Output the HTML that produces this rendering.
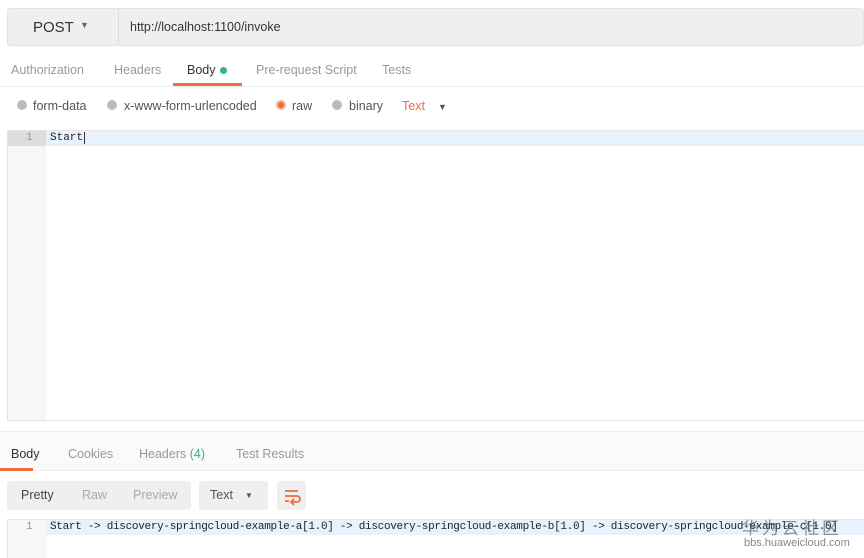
<!DOCTYPE html>
<html><head><meta charset="utf-8"><style>
*{margin:0;padding:0;box-sizing:border-box}
body{width:864px;height:558px;overflow:hidden;background:#fff;font-family:"Liberation Sans",sans-serif;position:relative;color:#333}
.a{position:absolute}
.mono{font-family:"Liberation Mono",monospace}
</style></head><body>
<div class="a" style="left:7px;top:8px;width:857px;height:38px;background:#efefef;border:1px solid #e3e3e3;border-radius:3px"></div>
<div class="a" style="left:118px;top:9px;width:1px;height:36px;background:#ddd"></div>
<div class="a" style="left:33px;top:19px;font-size:15px;color:#333">POST</div>
<div class="a" style="left:80px;top:20px;font-size:9px;color:#666">▼</div>
<div class="a" style="left:130px;top:20px;font-size:12.5px;color:#333">http://localhost:1100/invoke</div>

<div class="a" style="left:0;top:86px;width:864px;height:1px;background:#eee"></div>
<div class="a" style="top:63px;left:11px;font-size:12.5px;color:#999">Authorization</div>
<div class="a" style="top:63px;left:114px;font-size:12.5px;color:#999">Headers</div>
<div class="a" style="top:63px;left:187px;font-size:12.5px;color:#333">Body</div>
<div class="a" style="top:67px;left:220px;width:7px;height:7px;border-radius:50%;background:#2eb886"></div>
<div class="a" style="top:83px;left:173px;width:69px;height:3px;background:#f26b3a"></div>
<div class="a" style="top:63px;left:256px;font-size:12.5px;color:#999">Pre-request Script</div>
<div class="a" style="top:63px;left:382px;font-size:12.5px;color:#999">Tests</div>

<div class="a" style="top:100px;left:17px;width:10px;height:10px;border-radius:50%;background:#bbb"></div>
<div class="a" style="top:99px;left:33px;font-size:12.5px;color:#555">form-data</div>
<div class="a" style="top:100px;left:107px;width:10px;height:10px;border-radius:50%;background:#bbb"></div>
<div class="a" style="top:99px;left:124px;font-size:12.5px;color:#555">x-www-form-urlencoded</div>
<div class="a" style="top:100px;left:276px;width:10px;height:10px;border-radius:50%;background:#f26b3a;border:2px solid #f5b49a"></div>
<div class="a" style="top:99px;left:292px;font-size:12.5px;color:#555">raw</div>
<div class="a" style="top:100px;left:332px;width:10px;height:10px;border-radius:50%;background:#bbb"></div>
<div class="a" style="top:99px;left:349px;font-size:12.5px;color:#555">binary</div>
<div class="a" style="top:99px;left:402px;font-size:12.5px;color:#f26b3a">Text</div>
<div class="a" style="top:102px;left:438px;font-size:9px;color:#555">▼</div>

<div class="a" style="left:7px;top:130px;width:857px;height:291px;border:1px solid #e5e5e5;border-right:none"></div>
<div class="a" style="left:8px;top:131px;width:38px;height:289px;background:#f7f7f7"></div>
<div class="a" style="left:8px;top:131px;width:38px;height:15px;background:#ddd"></div>
<div class="a" style="left:46px;top:131px;width:818px;height:15px;background:#e8f2fe"></div>
<div class="a mono" style="left:26px;top:132px;font-size:11px;color:#999">1</div>
<div class="a mono" style="left:50px;top:132px;font-size:11px;color:#222">Start<span style="border-left:1px solid #333;margin-left:1px"></span></div>

<div class="a" style="left:0;top:431px;width:864px;height:40px;background:#fafafa;border-top:1px solid #eee;border-bottom:1px solid #eee"></div>
<div class="a" style="top:447px;left:11px;font-size:12.5px;color:#333">Body</div>
<div class="a" style="top:468px;left:0;width:33px;height:3px;background:#f26b3a"></div>
<div class="a" style="top:447px;left:68px;font-size:12.5px;color:#999">Cookies</div>
<div class="a" style="top:447px;left:139px;font-size:12.5px;color:#999">Headers <span style="color:#2eb886">(4)</span></div>
<div class="a" style="top:447px;left:236px;font-size:12.5px;color:#999">Test Results</div>

<div class="a" style="left:7px;top:481px;width:184px;height:29px;background:#efefef;border-radius:3px"></div>
<div class="a" style="top:488px;left:21px;font-size:12.5px;color:#444">Pretty</div>
<div class="a" style="top:488px;left:82px;font-size:12.5px;color:#aaa">Raw</div>
<div class="a" style="top:488px;left:133px;font-size:12.5px;color:#aaa">Preview</div>
<div class="a" style="left:199px;top:481px;width:69px;height:29px;background:#efefef;border-radius:3px"></div>
<div class="a" style="top:488px;left:210px;font-size:12.5px;color:#555">Text</div>
<div class="a" style="top:491px;left:245px;font-size:8px;color:#555">▼</div>
<div class="a" style="left:277px;top:481px;width:29px;height:29px;background:#efefef;border-radius:3px"></div>
<svg class="a" style="left:282px;top:486px" width="20" height="20" viewBox="0 0 20 20"><path d="M3 5h13M3 10h12a3 3 0 0 1 0 6h-5M12 13l-3 3 3 3M3 15h4" stroke="#f26b3a" stroke-width="1.8" fill="none"/></svg>

<div class="a" style="left:7px;top:519px;width:857px;height:39px;border:1px solid #e5e5e5;border-right:none;border-bottom:none"></div>
<div class="a" style="left:8px;top:520px;width:38px;height:38px;background:#f7f7f7"></div>
<div class="a" style="left:46px;top:520px;width:818px;height:15px;background:#e8f2fe"></div>
<div class="a mono" style="left:26px;top:521px;font-size:11px;color:#999">1</div>
<div class="a mono" style="left:50px;top:521px;font-size:11px;letter-spacing:-0.3px;color:#222;white-space:nowrap">Start -&gt; discovery-springcloud-example-a[1.0] -&gt; discovery-springcloud-example-b[1.0] -&gt; discovery-springcloud-example-c[1.0]</div>
<div class="a" style="left:742px;top:514px;font-size:17px;color:rgba(80,80,80,.6);font-family:'Liberation Sans','Noto Sans CJK SC',sans-serif;letter-spacing:3px">华为云社区</div>
<div class="a" style="left:744px;top:537px;font-size:11px;color:#888">bbs.huaweicloud.com</div>
</body></html>
